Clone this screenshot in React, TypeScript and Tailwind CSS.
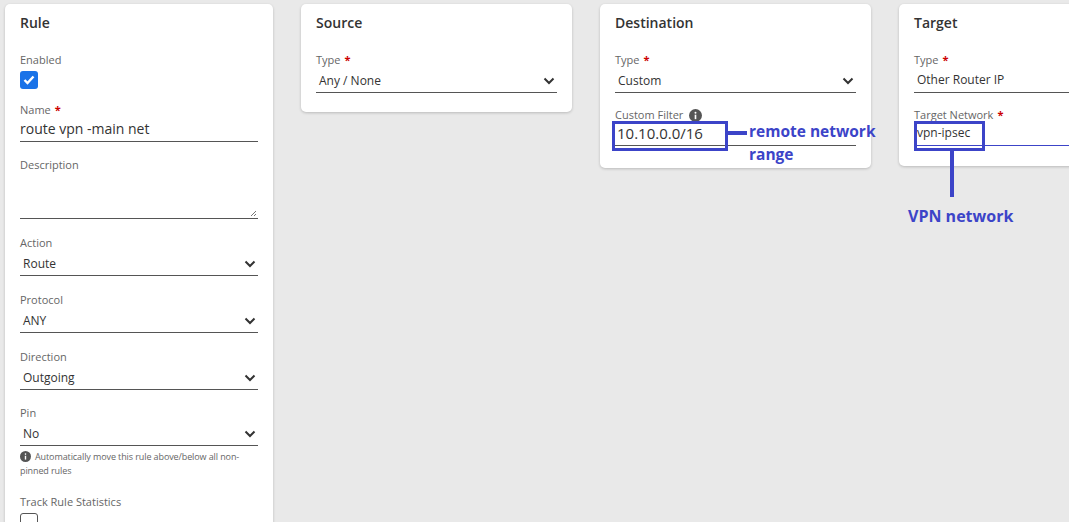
import React from "react";

const Chevron = () => (
  <svg width="12" height="8" viewBox="0 0 12 8" className="shrink-0"><path d="M1.5 1.5 L6 6 L10.5 1.5" stroke="#333" strokeWidth="2" fill="none" /></svg>
);
const Info = ({ s = 12 }: { s?: number }) => (
  <svg width={s} height={s} viewBox="0 0 16 16"><circle cx="8" cy="8" r="8" fill="#555" /><rect x="7" y="7" width="2" height="5.5" fill="#fff" /><circle cx="8" cy="4.5" r="1.2" fill="#fff" /></svg>
);
const Label = ({ t, req }: { t: string; req?: boolean }) => (
  <div className="text-[11px] text-[#666] leading-[14px]">{t}{req && <span className="text-[#c00] ml-1 font-bold">*</span>}</div>
);
const Select = ({ v }: { v: string }) => (
  <div className="flex items-center justify-between border-b border-[#555] h-[24px] pl-[3px] pr-[2px] text-[12px] text-[#333] mt-[2px]">
    <span>{v}</span><Chevron />
  </div>
);
const Card = ({ title, children, cls }: { title: string; children?: React.ReactNode; cls: string }) => (
  <div className={"bg-white rounded-[5px] shadow-[0_1px_3px_rgba(0,0,0,0.2)] px-[15px] pt-[9px] shrink-0 " + cls}>
    <div className="text-[14px] font-semibold text-[#333] leading-[20px] mb-[20px]">{title}</div>
    {children}
  </div>
);

export default function App() {
  return (
    <div className="relative w-[1069px] h-[522px] overflow-hidden bg-[#e9e9e9] flex items-start gap-[28px] pl-[5px] pt-[4px]" style={{ fontFamily: "'Open Sans', 'Noto Sans', sans-serif" }}>
      <Card title="Rule" cls="w-[268px] h-[540px]">
        <Label t="Enabled" />
        <div className="w-[18px] h-[18px] bg-[#1a73e8] rounded-[3px] mt-[4px] flex items-center justify-center">
          <svg width="12" height="10" viewBox="0 0 12 10"><path d="M1.5 5 L4.5 8 L10.5 1.5" stroke="#fff" strokeWidth="2.4" fill="none" /></svg>
        </div>
        <div className="mt-[14px]"><Label t="Name" req /></div>
        <div className="border-b border-[#555] h-[24px] text-[14px] text-[#333] leading-[22px] mt-[1px]">route vpn -main net</div>
        <div className="mt-[16px]"><Label t="Description" /></div>
        <div className="relative border-b border-[#555] h-[47px]">
          <svg className="absolute right-[1px] bottom-[1px]" width="7" height="7" viewBox="0 0 7 7"><path d="M6 1 L1 6 M6 4 L4 6" stroke="#777" /></svg>
        </div>
        <div className="mt-[17px]"><Label t="Action" /></div>
        <Select v="Route" />
        <div className="mt-[17px]"><Label t="Protocol" /></div>
        <Select v="ANY" />
        <div className="mt-[17px]"><Label t="Direction" /></div>
        <Select v="Outgoing" />
        <div className="mt-[16px]"><Label t="Pin" /></div>
        <Select v="No" />
        <div className="mt-[4px] text-[9px] text-[#666] leading-[14px] tracking-[-0.1px]"><span className="inline-block align-[-2px] mr-[4px]"><Info s={11} /></span>Automatically move this rule above/below all non-pinned rules</div>
        <div className="mt-[17px]"><Label t="Track Rule Statistics" /></div>
        <div className="w-[18px] h-[18px] border border-[#555] rounded-[3px] mt-[4px]" />
      </Card>
      <Card title="Source" cls="w-[271px] h-[108px]">
        <Label t="Type" req />
        <Select v="Any / None" />
      </Card>
      <Card title="Destination" cls="w-[271px] h-[164px]">
        <Label t="Type" req />
        <Select v="Custom" />
        <div className="mt-[15px] flex items-center gap-[6px]"><Label t="Custom Filter" /><Info s={13} /></div>
        <div className="border-b border-[#555] h-[24px] text-[15px] text-[#333] leading-[22px] pl-[2px]">10.10.0.0/16</div>
      </Card>
      <Card title="Target" cls="w-[271px] h-[162px]">
        <Label t="Type" req />
        <div className="border-b border-[#555] h-[24px] pl-[3px] text-[12px] text-[#333] mt-[2px] leading-[22px]">Other Router IP</div>
        <div className="mt-[15px]"><Label t="Target Network" req /></div>
        <div className="border-b border-[#3c44c8] h-[24px] text-[12px] text-[#333] leading-[22px] pl-[3px]">vpn-ipsec</div>
      </Card>

      <div className="absolute left-[612px] top-[121px] w-[116px] h-[30px] border-[3px] border-[#3c44c8]" />
      <div className="absolute left-[727px] top-[131px] w-[20px] h-[4px] bg-[#3c44c8]" />
      <div className="absolute left-[749px] top-[120px] text-[15.5px] font-bold text-[#3c44c8] leading-[23px]">remote network<br />range</div>
      <div className="absolute left-[914px] top-[121px] w-[71px] h-[30px] border-[3px] border-[#3c44c8]" />
      <div className="absolute left-[950px] top-[150px] w-[4px] h-[47px] bg-[#3c44c8]" />
      <div className="absolute left-[908px] top-[205px] text-[16px] font-bold text-[#3c44c8] leading-[23px]">VPN network</div>
    </div>
  );
}
